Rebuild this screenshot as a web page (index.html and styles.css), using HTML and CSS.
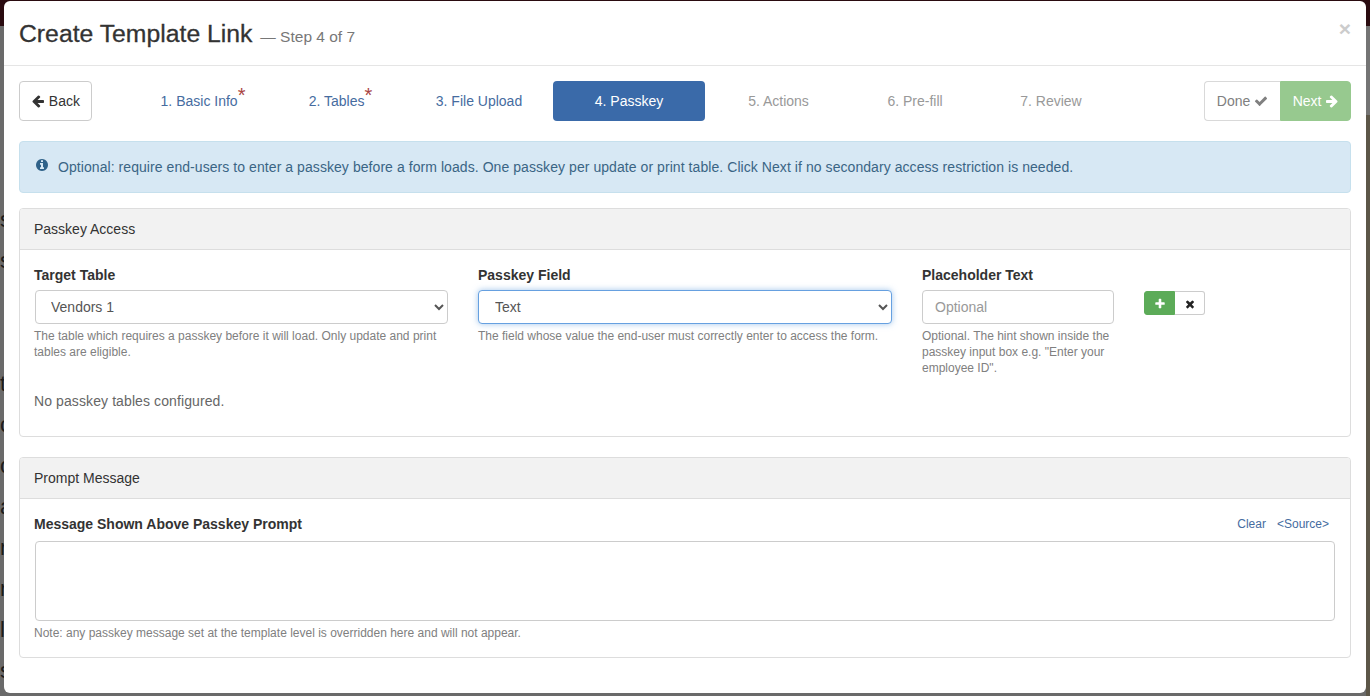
FILE: index.html
```html
<!DOCTYPE html>
<html lang="en">
<head>
  <meta charset="UTF-8">
  <title>Create Template Link</title>
  <link rel="stylesheet" href="styles.css">
</head>
<body>

<svg class="defs" width="0" height="0">
  <symbol id="i-left" viewBox="0 0 1792 1792"><path d="M1664 896v128q0 53-32.5 90.5t-84.5 37.5h-704l293 294q38 36 38 90t-38 90l-75 76q-37 37-90 37-52 0-91-37l-651-652q-37-37-37-90 0-52 37-91l651-650q38-38 91-38 52 0 90 38l75 74q38 38 38 91t-38 91l-293 293h704q52 0 84.5 37.5t32.5 90.5z"/></symbol>
  <symbol id="i-right" viewBox="0 0 1792 1792"><path d="M1600 960q0 54-37 91l-651 651q-39 37-91 37-51 0-90-37l-75-75q-38-38-38-91t38-91l293-293h-704q-52 0-84.5-37.5t-32.5-90.5v-128q0-53 32.5-90.5t84.5-37.5h704l-293-294q-38-36-38-90t38-90l75-75q38-38 90-38 53 0 91 38l651 651q37 35 37 90z"/></symbol>
  <symbol id="i-check" viewBox="0 0 1792 1792"><path d="M1671 566q0 40-28 68l-724 724-136 136q-28 28-68 28t-68-28l-136-136-362-362q-28-28-28-68t28-68l136-136q28-28 68-28t68 28l294 295 656-657q28-28 68-28t68 28l136 136q28 28 28 68z"/></symbol>
  <symbol id="i-times" viewBox="0 0 1792 1792"><path d="M1490 1322q0 40-28 68l-136 136q-28 28-68 28t-68-28l-294-294-294 294q-28 28-68 28t-68-28l-136-136q-28-28-28-68t28-68l294-294-294-294q-28-28-28-68t28-68l136-136q28-28 68-28t68 28l294 294 294-294q28-28 68-28t68 28l136 136q28 28 28 68t-28 68l-294 294 294 294q28 28 28 68z"/></symbol>
  <symbol id="i-plus" viewBox="0 0 1792 1792"><path d="M1600 736v192q0 40-28 68t-68 28h-416v416q0 40-28 68t-68 28h-192q-40 0-68-28t-28-68v-416h-416q-40 0-68-28t-28-68v-192q0-40 28-68t68-28h416v-416q0-40 28-68t68-28h192q40 0 68 28t28 68v416h416q40 0 68 28t28 68z"/></symbol>
  <symbol id="i-info" viewBox="0 0 1792 1792"><path d="M1152 1376v-160q0-14-9-23t-23-9h-96v-512q0-14-9-23t-23-9h-320q-14 0-23 9t-9 23v160q0 14 9 23t23 9h96v320h-96q-14 0-23 9t-9 23v160q0 14 9 23t23 9h448q14 0 23-9t9-23zm-128-896v-160q0-14-9-23t-23-9h-192q-14 0-23 9t-9 23v160q0 14 9 23t23 9h192q14 0 23-9t9-23zm640 416q0 209-103 385.5t-279.5 279.5-385.5 103-385.5-103-279.5-279.5-103-385.5 103-385.5 279.5-279.5 385.5-103 385.5 103 279.5 279.5 103 385.5z"/></symbol>
</svg>

<div class="page">
  <div class="gutter-left" aria-hidden="true">
    <span>s</span><span>s</span><span>&nbsp;</span><span>&nbsp;</span><span>t</span><span>c</span><span>o</span><span>a</span><span>r</span><span>r</span><span>l</span><span>s</span>
  </div>

  <div class="modal">
    <div class="modal-header">
      <h4 class="modal-title">Create Template Link <small>— Step 4 of 7</small></h4>
      <button class="close">×</button>
    </div>

    <div class="modal-body">
      <div class="wizard">
        <button class="btn btn-back"><svg class="icon"><use href="#i-left"/></svg> Back</button>

        <ul class="steps">
          <li><a href="#">1. Basic Info<sup>*</sup></a></li>
          <li><a href="#">2. Tables<sup>*</sup></a></li>
          <li><a href="#">3. File Upload</a></li>
          <li class="active"><a href="#">4. Passkey</a></li>
          <li class="disabled"><a href="#">5. Actions</a></li>
          <li class="disabled"><a href="#">6. Pre-fill</a></li>
          <li class="disabled"><a href="#">7. Review</a></li>
        </ul>

        <div class="btn-group">
          <button class="btn btn-done">Done <svg class="icon"><use href="#i-check"/></svg></button>
          <button class="btn btn-next">Next <svg class="icon"><use href="#i-right"/></svg></button>
        </div>
      </div>

      <div class="alert">
        <svg class="icon icon-info"><use href="#i-info"/></svg>
        <span>Optional: require end-users to enter a passkey before a form loads. One passkey per update or print table. Click Next if no secondary access restriction is needed.</span>
      </div>

      <div class="panel panel-access">
        <div class="panel-heading">Passkey Access</div>
        <div class="panel-body">
          <div class="field-row">
            <div class="field">
              <label>Target Table</label>
              <select class="form-control"><option>Vendors 1</option></select>
              <p class="help">The table which requires a passkey before it will load. Only update and print tables are eligible.</p>
            </div>
            <div class="field">
              <label>Passkey Field</label>
              <select class="form-control focused"><option>Text</option></select>
              <p class="help">The field whose value the end-user must correctly enter to access the form.</p>
            </div>
            <div class="field">
              <label>Placeholder Text</label>
              <input class="form-control" type="text" placeholder="Optional">
              <p class="help">Optional. The hint shown inside the passkey input box e.g. "Enter your employee ID".</p>
            </div>
            <div class="row-actions">
              <button class="btn-xs btn-add"><svg class="icon"><use href="#i-plus"/></svg></button>
              <button class="btn-xs btn-clear"><svg class="icon"><use href="#i-times"/></svg></button>
            </div>
          </div>
          <p class="empty">No passkey tables configured.</p>
        </div>
      </div>

      <div class="panel">
        <div class="panel-heading">Prompt Message</div>
        <div class="panel-body">
          <div class="label-row">
            <label>Message Shown Above Passkey Prompt</label>
            <div class="editor-links"><a href="#">Clear</a><a href="#">&lt;Source&gt;</a></div>
          </div>
          <textarea class="form-control message"></textarea>
          <p class="help">Note: any passkey message set at the template level is overridden here and will not appear.</p>
        </div>
      </div>
    </div>
  </div>

  <div class="gutter-right"></div>
</div>

</body>
</html>
```

FILE: styles.css
```css
* {
  box-sizing: border-box;
}

html, body {
  height: 100%;
}

body {
  margin: 0;
  overflow: hidden;
  font-family: "Liberation Sans", Arial, sans-serif;
  font-size: 14px;
  line-height: 20px;
  color: #333;
  background: #666;
}

.defs {
  display: block;
  height: 0;
}

.page {
  display: flex;
  height: 696px;
  background: linear-gradient(#2a0b10 0, #2a0b10 26px, #6a6a6a 26px, #6a6a6a 100%);
}

/* bits of the page behind the modal */
.gutter-left {
  width: 4px;
  height: 696px;
  flex: none;
  overflow: hidden;
  padding-top: 199px;
  font-size: 22px;
  line-height: 41px;
  text-align: right;
  color: #1c1c1c;
}

.gutter-left span {
  display: block;
}

.gutter-right {
  width: 4px;
  flex: none;
  background: linear-gradient(#2a0b10 0, #2a0b10 26px, #747474 26px, #747474 115px, #5c5648 115px);
}

.modal {
  width: 1362px;
  flex: none;
  height: 692px;
  margin-top: 1px;
  background: #fff;
  border-radius: 6px;
}

.modal-header {
  display: flex;
  justify-content: space-between;
  height: 65px;
  padding: 18px 15px 0;
  border-bottom: 1px solid #e5e5e5;
}

.modal-title {
  margin: 0;
  font-size: 24.75px;
  line-height: 30px;
  font-weight: 500;
  color: #333;
  -webkit-text-stroke: .3px #333;
}

.modal-title small {
  margin-left: 1px;
  font-size: 15.5px;
  font-weight: 400;
  color: #777;
  -webkit-text-stroke: 0;
}

.close {
  padding: 0;
  height: 20px;
  border: 0;
  background: none;
  font-family: inherit;
  font-size: 21px;
  line-height: 20px;
  font-weight: 700;
  color: #ccc;
}

.modal-body {
  padding: 15px;
}

.icon {
  display: inline-block;
  width: 14px;
  height: 14px;
  fill: currentColor;
  vertical-align: -2px;
}

.btn {
  height: 40px;
  padding: 0 12px;
  background: #fff;
  border: 1px solid #ccc;
  border-radius: 4px;
  font-family: inherit;
  font-size: 14px;
  color: #333;
}

.wizard {
  display: flex;
  align-items: center;
  height: 40px;
}

.btn-back {
  width: 73px;
  padding: 0;
  flex: none;
}

.steps {
  display: grid;
  grid-template-columns: 146px 129px 148px 152px 147px 126px 146px;
  margin: 0 0 0 38px;
  padding: 0;
  list-style: none;
}

.steps a {
  display: block;
  height: 40px;
  line-height: 40px;
  text-align: center;
  text-decoration: none;
  color: #466c9f;
  border-radius: 4px;
}

.steps sup {
  font-size: 20px;
  line-height: 0;
  vertical-align: 4px;
  color: #a94442;
}

.steps .active a {
  background: #3a6aa9;
  color: #fff;
}

.steps .disabled a {
  color: #999;
}

.btn-group {
  display: flex;
  margin-left: auto;
}

.btn-done {
  width: 76px;
  padding: 0;
  color: #808080;
  border-radius: 4px 0 0 4px;
  border-color: #d9d9d9;
  border-right: 0;
}

.btn-next {
  width: 71px;
  padding: 0 0 0 1px;
  color: #fff;
  background: #97c98f;
  border-color: #97c98f;
  border-radius: 0 4px 4px 0;
}

.alert {
  display: flex;
  align-items: center;
  gap: 9px;
  height: 52px;
  margin: 20px 0 15px;
  padding: 0 15px;
  background: #d7e8f4;
  border: 1px solid #c6e0ed;
  border-radius: 4px;
  color: #3a6585;
  letter-spacing: .065px;
}

.icon-info {
  color: #2f6289;
  margin-top: -4px;
}

.panel {
  border: 1px solid #ddd;
  border-radius: 4px;
  background: #fff;
}

.panel-access {
  margin-bottom: 20px;
}

.panel-heading {
  height: 41px;
  padding: 10px 15px 0 14px;
  background: #f2f2f2;
  border-bottom: 1px solid #ddd;
  border-radius: 3px 3px 0 0;
}

.panel-body {
  padding: 15px 15px 16px 14px;
}

.panel-access .panel-body {
  padding-bottom: 25px;
}

.field-row {
  display: grid;
  grid-template-columns: 414px 414px 192px auto;
  gap: 30px;
}

label {
  display: block;
  margin-bottom: 5px;
  font-weight: 700;
}

.form-control {
  display: block;
  width: 100%;
  height: 34px;
  padding: 0 12px;
  background: #fff;
  border: 1px solid #ccc;
  border-radius: 4px;
  font-family: inherit;
  font-size: 14px;
  color: #555;
}

.field:first-child .form-control {
  width: 413px;
  margin-left: 1px;
  padding-left: 11px;
}

.form-control::placeholder {
  color: #999;
}

.focused {
  border-color: #66a0e0;
  box-shadow: 0 0 6px rgba(102, 160, 224, .6);
}

.help {
  margin: 4px 0 0;
  font-size: 12px;
  line-height: 16px;
  color: #808080;
}

.row-actions {
  display: flex;
  align-items: flex-start;
  padding-top: 26px;
}

.btn-xs {
  width: 31px;
  height: 24px;
  padding: 0;
  border: 1px solid #ccc;
  background: #fff;
  color: #222;
  line-height: 1;
}

.btn-xs .icon {
  width: 12px;
  height: 12px;
  vertical-align: middle;
}

.btn-add {
  background: #5cab58;
  border-color: #5cab58;
  border-radius: 3px 0 0 3px;
  color: #fff;
}

.btn-clear {
  width: 30px;
  border-left: 0;
  border-radius: 0 3px 3px 0;
}

.empty {
  margin: 15px 0 0;
  color: #666;
  letter-spacing: .1px;
}

.label-row {
  display: flex;
  justify-content: space-between;
}

.label-row label {
  margin-bottom: 7px;
}

.editor-links {
  display: flex;
  gap: 11px;
  padding-right: 6px;
  font-size: 12px;
}

.editor-links a {
  color: #466c9f;
  text-decoration: none;
}

.message {
  width: calc(100% - 1px);
  height: 80px;
  margin-left: 1px;
  resize: none;
}
```
